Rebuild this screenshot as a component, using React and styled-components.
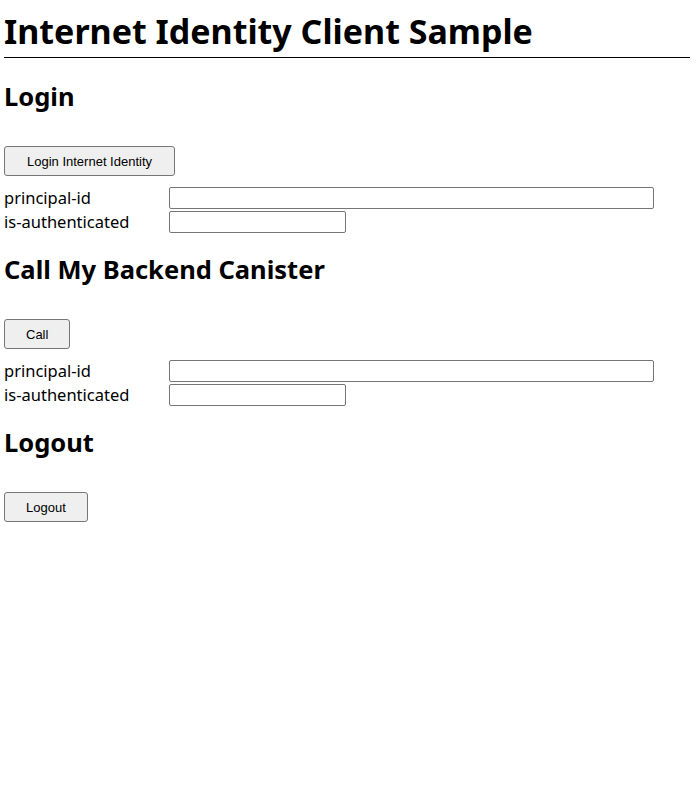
import React from 'react'
import styled, { createGlobalStyle } from 'styled-components'

const GlobalStyle = createGlobalStyle`
  html, body {
    margin: 0;
    padding: 0;
    background: #fff;
  }
  body {
    padding: 0 6px 0 4px;
    font-family: "Noto Sans", "Noto Sans CJK JP", sans-serif;
    color: #000;
  }
`

const Title = styled.h1`
  margin: 0 0 2px;
  padding: 11px 0 6px;
  font-size: 34px;
  font-weight: 700;
  line-height: 40px;
  border-bottom: 1px solid #000;
`

const Section = styled.section`
  display: flex;
  flex-direction: column;
  align-items: flex-start;
`

const Heading = styled.h2`
  margin: 21px 0 35px;
  font-size: 25.5px;
  font-weight: 700;
  line-height: 30px;
`

const Button = styled.button`
  font-family: "Liberation Sans", Arial, sans-serif;
  font-size: 13px;
  height: 30px;
  padding: 0 ${p => p.$pad}px;
  background: #efefef;
  border: 1px solid #767676;
  border-radius: 3px;
  color: #000;
`

const Fields = styled.div`
  display: grid;
  grid-template-columns: 165px auto;
  row-gap: 2px;
  margin-top: 11px;
  justify-items: start;
  align-items: center;
`

const Label = styled.label`
  font-size: 16.5px;
  line-height: 22px;
`

const Input = styled.input`
  box-sizing: border-box;
  height: 22px;
  width: ${p => p.$w}px;
  border: 1px solid #767676;
  border-radius: 2px;
  padding: 1px 2px;
  margin: 0;
`

const FieldRows = () => (
  <Fields>
    <Label>principal-id</Label>
    <Input $w={485} />
    <Label>is-authenticated</Label>
    <Input $w={177} />
  </Fields>
)

export default function App() {
  return (
    <>
      <GlobalStyle />
      <Title>Internet Identity Client Sample</Title>
      <Section>
        <Heading>Login</Heading>
        <Button $pad={22}>Login Internet Identity</Button>
        <FieldRows />
      </Section>
      <Section>
        <Heading>Call My Backend Canister</Heading>
        <Button $pad={21}>Call</Button>
        <FieldRows />
      </Section>
      <Section>
        <Heading>Logout</Heading>
        <Button $pad={21}>Logout</Button>
      </Section>
    </>
  )
}
